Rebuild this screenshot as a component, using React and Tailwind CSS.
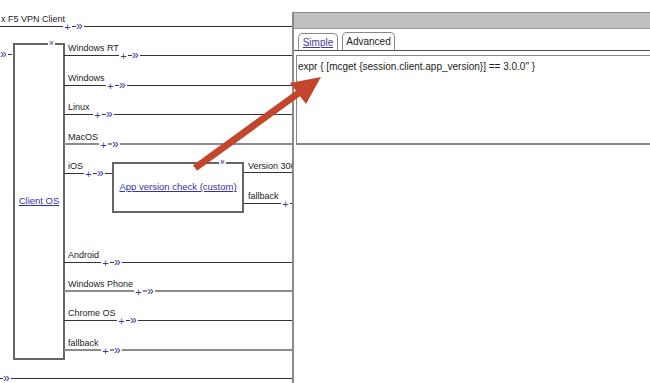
import React from "react";

const font = { fontFamily: '"Liberation Sans", Arial, sans-serif' };

// branches coming out of the Client OS box
const branches = [
  { label: "Windows RT", top: "top-[43px]", seg: "w-[55px]", tone: "dark" },
  { label: "Windows", top: "top-[73px]", seg: "w-[42px]", tone: "dark" },
  { label: "Linux", top: "top-[102px]", seg: "w-[29px]", tone: "dark" },
  { label: "MacOS", top: "top-[132px]", seg: "w-[35px]", tone: "gray" },
  { label: "Android", top: "top-[250px]", seg: "w-[37px]", tone: "dark" },
  { label: "Windows Phone", top: "top-[279px]", seg: "w-[70px]", tone: "gray" },
  { label: "Chrome OS", top: "top-[308px]", seg: "w-[53px]", tone: "dark" },
  { label: "fallback", top: "top-[338px]", seg: "w-[37px]", tone: "gray" },
];

const Line = ({ tone, className = "" }) => (
  <div
    className={`${tone === "gray" ? "h-[2px] bg-[#8c8c8c]" : "h-px bg-[#333]"} ${className}`}
  />
);

const Chevrons = () => (
  <span className="text-[12px] leading-[10px] tracking-[-3px] text-[#3a3aa8] pr-[4px] -mt-px">»</span>
);

const PlusArrow = ({ tone }) => (
  <>
    <span className="w-[9px] text-center text-[11px] leading-[10px] text-[#3a3aa8] mt-[2px]">+</span>
    <Line tone={tone} className="w-[4px]" />
    <Chevrons />
  </>
);

const Branch = ({ label, top, seg, tone, width = "w-[229px]" }) => (
  <div className={`absolute left-[64px] ${top} ${width}`}>
    <div className="h-[11px] pl-[4px] text-[9px] leading-[10px] text-[#222] whitespace-nowrap">
      {label}
    </div>
    <div className="flex items-center h-[2px]">
      <Line tone={tone} className={seg} />
      <PlusArrow tone={tone} />
      <Line tone={tone} className="flex-1" />
    </div>
  </div>
);

export default function App() {
  return (
    <div className="relative w-[650px] h-[383px] overflow-hidden bg-white" style={font}>
      {/* top entry line */}
      <div className="absolute left-0 top-[14px] w-[293px]">
        <div className="h-[11px] pl-px text-[9px] leading-[10px] text-[#222] whitespace-nowrap">
          x F5 VPN Client
        </div>
        <div className="flex items-center h-[2px]">
          <Line tone="dark" className="w-[63px]" />
          <PlusArrow tone="dark" />
          <Line tone="dark" className="flex-1" />
        </div>
      </div>

      {/* entry into Client OS */}
      <div className="absolute left-0 top-[49px] flex items-center h-[10px]">
        <Chevrons />
        <Line tone="dark" className="w-[4px]" />
      </div>

      {/* Client OS box */}
      <div className="absolute left-[13px] top-[43px] w-[52px] h-[317px] border-2 border-[#666] flex items-center justify-center">
        <span className="text-[9.5px] text-[#3333a6] underline">Client OS</span>
        <span className="absolute -top-[7px] right-[8px] bg-white px-px text-[9px] leading-[10px] text-[#3a3aa8]">×</span>
      </div>

      {branches.map((b) => (
        <Branch key={b.label} {...b} />
      ))}

      {/* iOS branch into App version check */}
      <div className="absolute left-[64px] top-[161px] w-[49px]">
        <div className="h-[11px] pl-[4px] text-[9px] leading-[10px] text-[#222]">iOS</div>
        <div className="flex items-center h-[2px]">
          <Line tone="dark" className="w-[20px]" />
          <PlusArrow tone="dark" />
          <Line tone="dark" className="flex-1" />
        </div>
      </div>

      {/* App version check box */}
      <div className="absolute left-[112px] top-[162px] w-[132px] h-[51px] border-2 border-[#666] flex items-center justify-center">
        <span className="text-[9.5px] text-[#3333a6] underline whitespace-nowrap">App version check (custom)</span>
        <span className="absolute -top-[7px] right-[16px] bg-white px-px text-[9px] leading-[10px] text-[#3a3aa8]">×</span>
      </div>

      <div className="absolute left-[244px] top-[161px] w-[49px]">
        <div className="h-[11px] pl-[4px] text-[9px] leading-[10px] text-[#222] whitespace-nowrap">Version 300</div>
        <Line tone="dark" />
      </div>
      <div className="absolute left-[244px] top-[191px] w-[49px]">
        <div className="h-[11px] pl-[4px] text-[9px] leading-[10px] text-[#222]">fallback</div>
        <div className="flex items-center h-[2px]">
          <Line tone="dark" className="w-[37px]" />
          <span className="w-[9px] text-center text-[11px] leading-[10px] text-[#3a3aa8] mt-[2px]">+</span>
          <Line tone="dark" className="flex-1" />
        </div>
      </div>

      {/* bottom line */}
      <div className="absolute left-0 top-[373px] w-[293px] flex items-center h-[10px]">
        <Line tone="dark" className="w-[3px]" />
        <Chevrons />
        <Line tone="dark" className="flex-1" />
      </div>

      {/* properties panel */}
      <div className="absolute left-[292px] top-[12px] w-[370px] h-[380px] bg-white border-l-2 border-t border-[#8a8a8a]">
        <div className="h-[16px] bg-[#c0c0c0] border-b border-[#9a9a9a]" />
        <div className="flex items-end gap-[4px] pl-[4px] pt-[3px] border-b border-[#555]">
          <div className="h-[17px] w-[40px] rounded-t-[5px] border border-b-0 border-[#888] flex items-center justify-center text-[10px] text-[#4a3aa0] underline">
            Simple
          </div>
          <div className="h-[18px] w-[53px] rounded-t-[5px] border border-b-0 border-[#888] flex items-center justify-center text-[10px] text-[#222]">
            Advanced
          </div>
        </div>
        <div className="mt-[4px] ml-[2px] h-[90px] border border-[#888] border-b-2 px-[1px] pt-[3px] text-[10px] text-[#222] whitespace-nowrap">
          expr {"{"} [mcget {"{"}session.client.app_version{"}"}] == 3.0.0" {"}"}
        </div>
      </div>

      {/* red arrow */}
      <svg className="absolute left-0 top-0" width="650" height="383">
        <line x1="195" y1="168" x2="300" y2="92" stroke="#c2452c" strokeWidth="7" />
        <polygon points="321,77 306,104 290,83" fill="#c2452c" />
      </svg>
    </div>
  );
}
